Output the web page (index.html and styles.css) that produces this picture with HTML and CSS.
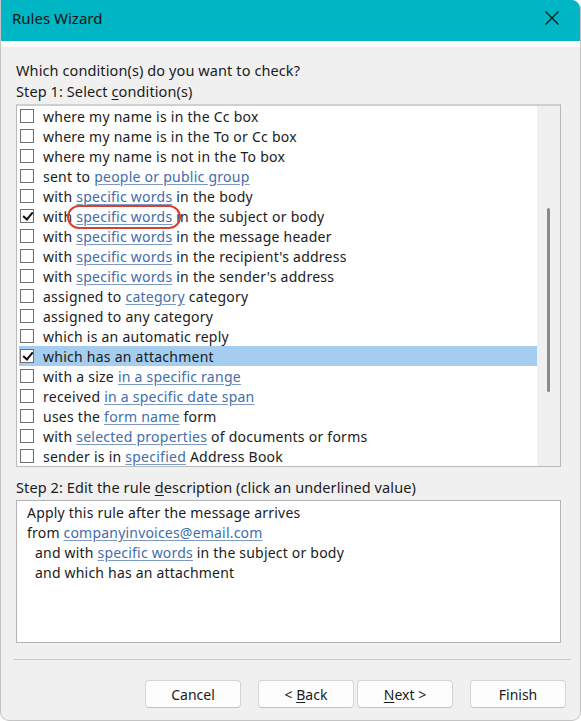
FILE: index.html
```html
<!DOCTYPE html>
<html lang="en">
<head>
<meta charset="utf-8">
<title>Rules Wizard</title>
<link rel="stylesheet" href="styles.css">
</head>
<body>
<div class="window">
  <header class="titlebar">
    <span class="title">Rules Wizard</span>
    <svg class="close" width="16" height="16" viewBox="0 0 16 16" aria-hidden="true">
      <path d="M1.5 1.5 L14.5 14.5 M14.5 1.5 L1.5 14.5" stroke="#1a1a1a" stroke-width="1.3" fill="none"/>
    </svg>
  </header>

  <main class="content">
    <p class="label">Which condition(s) do you want to check?</p>
    <p class="label">Step 1: Select <u>c</u>ondition(s)</p>

    <div class="listbox">
      <ul class="conditions">
        <li class="row"><span class="cb"></span>where my name is in the Cc box</li>
        <li class="row"><span class="cb"></span>where my name is in the To or Cc box</li>
        <li class="row"><span class="cb"></span>where my name is not in the To box</li>
        <li class="row"><span class="cb"></span>sent to&nbsp;<a class="link">people or public group</a></li>
        <li class="row"><span class="cb"></span>with&nbsp;<a class="link">specific words</a>&nbsp;in the body</li>
        <li class="row"><span class="cb checked"></span>with&nbsp;<a class="link marked">specific words</a>&nbsp;in the subject or body</li>
        <li class="row"><span class="cb"></span>with&nbsp;<a class="link">specific words</a>&nbsp;in the message header</li>
        <li class="row"><span class="cb"></span>with&nbsp;<a class="link">specific words</a>&nbsp;in the recipient's address</li>
        <li class="row"><span class="cb"></span>with&nbsp;<a class="link">specific words</a>&nbsp;in the sender's address</li>
        <li class="row"><span class="cb"></span>assigned to&nbsp;<a class="link">category</a>&nbsp;category</li>
        <li class="row"><span class="cb"></span>assigned to any category</li>
        <li class="row"><span class="cb"></span>which is an automatic reply</li>
        <li class="row selected"><span class="cb checked"></span>which has an attachment</li>
        <li class="row"><span class="cb"></span>with a size&nbsp;<a class="link">in a specific range</a></li>
        <li class="row"><span class="cb"></span>received&nbsp;<a class="link">in a specific date span</a></li>
        <li class="row"><span class="cb"></span>uses the&nbsp;<a class="link">form name</a>&nbsp;form</li>
        <li class="row"><span class="cb"></span>with&nbsp;<a class="link">selected properties</a>&nbsp;of documents or forms</li>
        <li class="row"><span class="cb"></span>sender is in&nbsp;<a class="link">specified</a>&nbsp;Address Book</li>
      </ul>
      <div class="scrollbar"><span class="thumb"></span></div>
    </div>

    <p class="label step2">Step 2: Edit the rule <u>d</u>escription (click an underlined value)</p>

    <div class="description">
      <p class="desc-line">Apply this rule after the message arrives</p>
      <p class="desc-line">from <a class="link">companyinvoices@email.com</a></p>
      <p class="desc-line indent">and with <a class="link">specific words</a> in the subject or body</p>
      <p class="desc-line indent">and which has an attachment</p>
    </div>

    <hr class="separator">

    <div class="buttons">
      <button class="btn">Cancel</button>
      <div class="pair">
        <button class="btn">&lt; <u>B</u>ack</button>
        <button class="btn"><u>N</u>ext &gt;</button>
      </div>
      <button class="btn">Finish</button>
    </div>
  </main>
</div>
</body>
</html>
```

FILE: styles.css
```css
* {
  box-sizing: border-box;
}

html, body {
  margin: 0;
  padding: 0;
  background: #ffffff;
}

body {
  font-family: "Noto Sans", "Open Sans", sans-serif;
  font-size: 14px;
  letter-spacing: 0.2px;
  color: #1b1b1b;
}

.window {
  width: 581px;
  height: 721px;
  display: flex;
  flex-direction: column;
  background: #f0f0f0;
  border: 1px solid #c4c4c4;
  border-top: none;
  border-radius: 0 9px 9px 9px;
  overflow: hidden;
}

.titlebar {
  height: 47px;
  flex: none;
  display: flex;
  align-items: center;
  justify-content: space-between;
  padding: 0 20px 6px 11px;
  background: #00b5c4;
  border-bottom: 6px solid #ffffff;
}

.title {
  font-size: 15px;
  letter-spacing: 0;
  color: #111;
}

.close {
  display: block;
  margin-top: 1px;
}

.content {
  flex: 1;
  display: flex;
  flex-direction: column;
  padding: 13px 19px 0 15px;
}

.label {
  margin: 0;
  height: 21px;
  line-height: 21px;
  font-size: 14.5px;
  letter-spacing: 0.1px;
  white-space: nowrap;
}

.label u,
.btn u {
  text-underline-offset: 2px;
}

.listbox {
  margin-top: 2px;
  height: 363px;
  display: flex;
  background: #ffffff;
  border: 1px solid #b9b9b9;
  border-top: 2px solid #cfcfcf;
}

.conditions {
  list-style: none;
  margin: 0;
  padding: 0 0 0 2px;
  flex: 1;
  min-width: 0;
  letter-spacing: 0.25px;
}

.row {
  height: 20px;
  display: flex;
  align-items: center;
  white-space: nowrap;
}

.row.selected {
  background: #a4cdef;
}

.cb {
  width: 14px;
  height: 14px;
  flex: none;
  margin: 0 9px 0 1px;
  border: 1px solid #6f6f6f;
  background: #ffffff;
  position: relative;
}

.cb.checked::after {
  content: "";
  position: absolute;
  left: 4px;
  top: 0px;
  width: 4px;
  height: 8px;
  border-right: 2px solid #111;
  border-bottom: 2px solid #111;
  transform: rotate(40deg);
}

.link {
  color: #3f6eab;
  text-decoration: underline;
  text-underline-offset: 2px;
  text-decoration-color: #7c9ac4;
}

.marked {
  position: relative;
}

.marked::after {
  content: "";
  position: absolute;
  left: -9px;
  right: -9px;
  top: -2px;
  bottom: -3px;
  border: 2.5px solid #d9412e;
  border-radius: 13px;
}

.scrollbar {
  width: 23px;
  flex: none;
  background: #f0f0f0;
  display: flex;
  justify-content: center;
  padding-top: 102px;
}

.thumb {
  display: block;
  width: 3px;
  height: 184px;
  border-radius: 2px;
  background: #8a8a8a;
}

.step2 {
  margin-top: 10px;
}

.description {
  margin-top: 2px;
  height: 143px;
  background: #ffffff;
  border: 1px solid #b4b4b4;
  padding: 2px 10px;
}

.desc-line {
  margin: 0;
  height: 20px;
  line-height: 20px;
  white-space: nowrap;
}

.desc-line.indent {
  padding-left: 8px;
}

.separator {
  margin: 16px -10px 0 -2px;
  border: none;
  border-top: 1px solid #c6c6c6;
  height: 0;
}

.buttons {
  margin-top: 20px;
  margin-right: -5px;
  display: flex;
  justify-content: flex-end;
  gap: 17px;
}

.pair {
  display: flex;
  gap: 3px;
}

.btn {
  width: 96px;
  height: 28px;
  font: inherit;
  color: #1b1b1b;
  background: #fdfdfd;
  border: 1px solid #d3d3d3;
  border-bottom-color: #c2c2c2;
  border-radius: 4px;
  padding: 0;
}
```
